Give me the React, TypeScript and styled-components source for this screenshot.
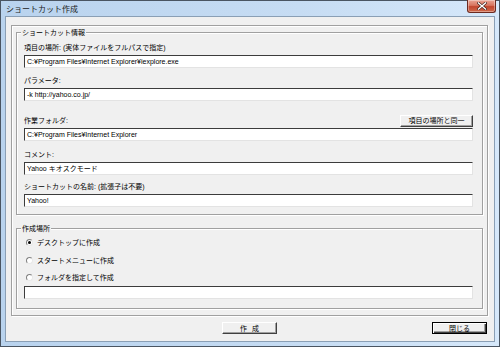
import React from "react";
import styled, { createGlobalStyle } from "styled-components";

const Global = createGlobalStyle`
  html, body { margin: 0; padding: 0; background: #ffffff; }
  * { box-sizing: border-box; }
  body { font-family: "Liberation Sans", "Noto Sans CJK JP", sans-serif; }
`;

const FONT = `"Liberation Sans", "Noto Sans CJK JP", sans-serif`;

const Window = styled.div`
  width: 500px;
  height: 347px;
  border: 1px solid #4a5562;
  background: linear-gradient(90deg, #b9d3ee 0%, #c6dcf3 60%, #d6e8fa 100%);
  display: flex;
  flex-direction: column;
  padding: 0 4px 4px 4px;
  font-family: ${FONT};
  font-size: 7px;
  color: #000;
`;

const TitleBar = styled.div`
  height: 15px;
  display: flex;
  align-items: flex-start;
`;

const Title = styled.div`
  margin-top: 3px;
  margin-left: 1px;
  font-family: "Noto Sans CJK JP", sans-serif;
  font-size: 8px;
  line-height: 10px;
  color: #1a1a1a;
`;

const CloseX = styled.div`
  margin-left: auto;
  margin-top: -1px;
  margin-right: -1px;
  width: 29px;
  height: 13px;
  border: 1px solid #6b2a20;
  border-top: none;
  border-radius: 0 0 3px 3px;
  background: linear-gradient(180deg, #e9a595 0%, #d8755f 45%, #c2462e 55%, #cf6a4c 100%);
  display: flex;
  align-items: center;
  justify-content: center;
  box-shadow: inset 0 0 0 1px rgba(255, 255, 255, 0.35);
`;

const Client = styled.div`
  flex: 1;
  border: 1px solid #8a9fb5;
  background: #f0f0f0;
  display: flex;
  flex-direction: column;
  padding: 8px 6px 6px 5px;
`;

const Panel = styled.div`
  border: 1px solid #a0a0a0;
  box-shadow: inset 1px 1px 0 #ffffff, 1px 1px 0 #ffffff;
  display: flex;
  flex-direction: column;
  gap: 13px;
  padding: 6px 4px 6px 4px;
`;

const Group = styled.div<{ $h: number }>`
  height: ${(p) => p.$h}px;
  border: 1px solid #a0a0a0;
  box-shadow: inset 1px 1px 0 #ffffff, 1px 1px 0 #ffffff;
  display: flex;
  flex-direction: column;
  padding: 0 9px 0 7px;
`;

const Legend = styled.div`
  align-self: flex-start;
  margin: -6px 0 0 -3px;
  padding: 0 1px;
  background: #f0f0f0;
  font-family: "Noto Sans CJK JP", sans-serif;
  line-height: 11px;
  height: 11px;
`;

const Field = styled.div<{ $top: number }>`
  margin-top: ${(p) => p.$top}px;
  display: flex;
  flex-direction: column;
  gap: 2px;
`;

const LabelRow = styled.div`
  display: flex;
  align-items: center;
  justify-content: space-between;
  height: 11px;
`;

const Label = styled.div`
  line-height: 11px;
  white-space: nowrap;
`;

const Input = styled.div`
  height: 13px;
  background: #ffffff;
  border-top: 1px solid #3c3c3c;
  border-left: 1px solid #3c3c3c;
  border-right: 1px solid #e3e3e3;
  border-bottom: 1px solid #e3e3e3;
  padding: 0 2px;
  line-height: 11px;
  white-space: nowrap;
  overflow: hidden;
`;

const SmallButton = styled.div`
  height: 12px;
  width: 73px;
  margin-top: -1px;
  margin-bottom: -1px;
  background: #f0f0f0;
  border: 1px solid;
  border-color: #ffffff #404040 #404040 #ffffff;
  box-shadow: inset -1px -1px 0 #a0a0a0;
  display: flex;
  align-items: center;
  justify-content: center;
  line-height: 10px;
`;

const RadioRow = styled.div<{ $top: number }>`
  margin-top: ${(p) => p.$top}px;
  display: flex;
  align-items: center;
  gap: 4px;
  height: 11px;
  padding-left: 2px;
`;

const RadioCircle = styled.span<{ $on?: boolean }>`
  width: 7px;
  height: 7px;
  border-radius: 50%;
  background: #ffffff;
  border: 1px solid;
  border-color: #808080 #e8e8e8 #e8e8e8 #808080;
  display: flex;
  align-items: center;
  justify-content: center;
  &::after {
    content: "";
    width: 3px;
    height: 3px;
    border-radius: 50%;
    background: ${(p) => (p.$on ? "#000" : "transparent")};
  }
`;

const ButtonRow = styled.div`
  margin-top: 6px;
  display: grid;
  grid-template-columns: 1fr auto 1fr;
  align-items: center;
  height: 12px;
`;

const PushButton = styled.div<{ $default?: boolean }>`
  grid-column: ${(p) => (p.$default ? 3 : 2)};
  justify-self: ${(p) => (p.$default ? "end" : "center")};
  margin-right: ${(p) => (p.$default ? "1px" : "0")};
  width: 55px;
  height: 12px;
  background: #f0f0f0;
  border: 1px solid;
  border-color: ${(p) => (p.$default ? "#000" : "#ffffff #404040 #404040 #ffffff")};
  box-shadow: ${(p) =>
    p.$default
      ? "inset 1px 1px 0 #ffffff, inset -1px -1px 0 #404040, inset -2px -2px 0 #a0a0a0"
      : "inset -1px -1px 0 #a0a0a0"};
  display: flex;
  align-items: center;
  justify-content: center;
  line-height: 10px;
  font-family: "Noto Sans CJK JP", sans-serif;
  letter-spacing: ${(p) => (p.$default ? "0" : "5px")};
  padding-left: ${(p) => (p.$default ? "0" : "5px")};
`;

export default function App() {
  return (
    <>
      <Global />
      <Window>
        <TitleBar>
          <Title>ショートカット作成</Title>
          <CloseX>
            <svg width="10" height="8" viewBox="0 0 10 8">
              <path d="M1.5 1 L8.5 7 M8.5 1 L1.5 7" stroke="#3a1a14" strokeWidth="2.6" strokeLinecap="square" />
              <path d="M1.5 1 L8.5 7 M8.5 1 L1.5 7" stroke="#ffffff" strokeWidth="1.5" strokeLinecap="square" />
            </svg>
          </CloseX>
        </TitleBar>
        <Client>
          <Panel>
            <Group $h={183}>
              <Legend>ショートカット情報</Legend>
              <Field $top={4}>
                <Label>項目の場所: (実体ファイルをフルパスで指定)</Label>
                <Input>C:¥Program Files¥Internet Explorer¥iexplore.exe</Input>
              </Field>
              <Field $top={7}>
                <Label>パラメータ:</Label>
                <Input>-k http://yahoo.co.jp/</Input>
              </Field>
              <Field $top={14}>
                <LabelRow>
                  <Label>作業フォルダ:</Label>
                  <SmallButton>項目の場所と同一</SmallButton>
                </LabelRow>
                <Input>C:¥Program Files¥Internet Explorer</Input>
              </Field>
              <Field $top={8}>
                <Label>コメント:</Label>
                <Input>Yahoo キオスクモード</Input>
              </Field>
              <Field $top={6}>
                <Label>ショートカットの名前: (拡張子は不要)</Label>
                <Input>Yahoo!</Input>
              </Field>
            </Group>
            <Group $h={81}>
              <Legend>作成場所</Legend>
              <RadioRow $top={3}>
                <RadioCircle $on />
                <Label>デスクトップに作成</Label>
              </RadioRow>
              <RadioRow $top={7}>
                <RadioCircle />
                <Label>スタートメニューに作成</Label>
              </RadioRow>
              <RadioRow $top={6}>
                <RadioCircle />
                <Label>フォルダを指定して作成</Label>
              </RadioRow>
              <Field $top={3}>
                <Input />
              </Field>
            </Group>
          </Panel>
          <ButtonRow>
            <PushButton>作成</PushButton>
            <PushButton $default>閉じる</PushButton>
          </ButtonRow>
        </Client>
      </Window>
    </>
  );
}
